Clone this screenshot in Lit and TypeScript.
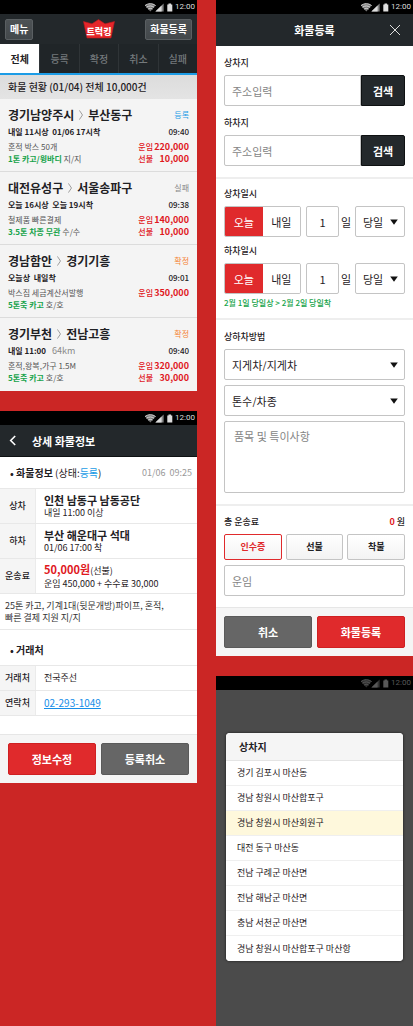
import { LitElement, html, css, nothing } from "lit";
import { customElement, state } from "lit/decorators.js";
import { classMap } from "lit/directives/class-map.js";

const base = css`
  :host {
    display: block;
    font-family: "Noto Sans CJK KR", "Noto Sans", sans-serif;
    font-size: 9px;
    line-height: 12px;
    color: #1f2124;
  }
  * {
    box-sizing: border-box;
  }
  h1, h2, h3, p, ul, dl, dd, dt {
    margin: 0;
    padding: 0;
    font: inherit;
  }
  ul {
    list-style: none;
  }
  button, input, select, textarea {
    margin: 0;
    font: inherit;
    color: inherit;
    min-width: 0;
  }
  button {
    padding: 0;
    cursor: pointer;
  }
  .actions {
    display: grid;
    grid-template-columns: 1fr 1fr;
    gap: 5px;
    padding: 8px;
    border-top: 1px solid #e6e6e6;
    background: #f5f5f5;
  }
  .action {
    height: 32px;
    border: 1px solid #5a5a5a;
    border-radius: 2px;
    background: #666;
    color: #fff;
    font-size: 11px;
    font-weight: 700;
  }
  .action.primary {
    border-color: #cf2022;
    background: #e02a2c;
  }
`;

@customElement("status-bar")
export class StatusBar extends LitElement {
  static styles = css`
    :host {
      display: flex;
      justify-content: flex-end;
      align-items: center;
      gap: 2px;
      height: 14px;
      padding-right: 2px;
      background: #000;
      color: #ddd;
      font: 8px/14px Roboto, sans-serif;
    }
    :host([dimmed]) {
      color: #585858;
    }
    .icons {
      display: block;
    }
  `;
  render() {
    return html`
      <svg class="icons" width="28" height="9" viewBox="0 0 28 9" fill="currentColor" aria-hidden="true">
        <path d="M0 2.6C3 .1 7.600 .1 10.600 2.600L5.300 8.600Z" opacity=".55" />
        <path d="M0 2.600C3 .1 7.600 .1 10.600 2.600M1.500 4.300C3.700 2.500 6.900 2.500 9.100 4.300M3.200 6.100C4.500 5 6.100 5 7.400 6.100" fill="none" stroke="currentColor" stroke-width="1" />
        <path d="M18.600 .4V8.600H10.400Z" opacity=".6" />
        <path d="M16.600 2.400V8.600H10.400Z" />
        <path d="M22.300 1.500H23.500V.6H26.100V1.500H27.300V8.600H22.300Z" />
      </svg>
      <span>12:00</span>
    `;
  }
}

interface Load {
  from: string;
  to: string;
  status: string;
  tone: string;
  when: string;
  distance?: string;
  time: string;
  goods: string;
  truck: string;
  handling: string;
  fares: [string, string][];
}

const loads: Load[] = [
  { from: "경기남양주시", to: "부산동구", status: "등록", tone: "blue", when: "내일 11시상\u00a0 01/06 17시착", time: "09:40", goods: "혼적 박스 50개", truck: "1톤 카고/윙바디", handling: "지/지", fares: [["운임", "220,000"], ["선불", "10,000"]] },
  { from: "대전유성구", to: "서울송파구", status: "실패", tone: "grey", when: "오늘 16시상\u00a0 오늘 19시착", time: "09:38", goods: "철제품 빠른결제", truck: "3.5톤 차종 무관", handling: "수/수", fares: [["운임", "140,000"], ["선불", "10,000"]] },
  { from: "경남함안", to: "경기기흥", status: "확정", tone: "orange", when: "오늘상\u00a0 내일착", time: "09:01", goods: "박스짐 세금계산서발행", truck: "5톤축 카고", handling: "호/호", fares: [["운임", "350,000"]] },
  { from: "경기부천", to: "전남고흥", status: "확정", tone: "orange", when: "내일 11:00", distance: "64km", time: "09:40", goods: "혼적,왕복,가구 1.5M", truck: "5톤축 카고", handling: "호/호", fares: [["운임", "320,000"], ["선불", "30,000"]] },
];

@customElement("load-list")
export class LoadList extends LitElement {
  static styles = [
    base,
    css`
      :host {
        background: #f4f4f4;
      }
      .bar {
        display: grid;
        grid-template-columns: 1fr auto 1fr;
        align-items: center;
        height: 30px;
        padding: 0 5px;
        background: #23282b;
      }
      .tool {
        height: 21px;
        padding: 0 4px;
        border: 1px solid #5a5f62;
        border-radius: 2px;
        background: linear-gradient(#4d5255, #43484b);
        color: #fff;
        font-size: 10px;
        font-weight: 700;
        justify-self: start;
      }
      .tool.end {
        justify-self: end;
      }
      .logo {
        display: block;
      }
      .tabs {
        display: grid;
        grid-template-columns: repeat(5, 1fr);
        height: 31px;
        border-bottom: 2px solid #1c9ce6;
        background: #202528;
      }
      .tab {
        border: 0;
        border-left: 1px solid #2f3437;
        background: none;
        color: #74797c;
        font-size: 10px;
        font-weight: 500;
      }
      .tab.on {
        border-left: 0;
        background: #fff;
        color: #1f2124;
        font-weight: 700;
      }
      .summary {
        height: 24px;
        padding: 0 8px;
        background: linear-gradient(#dcdcdc, #e4e4e4);
        font-size: 10px;
        line-height: 24px;
        font-weight: 500;
      }
      .load {
        display: grid;
        align-content: start;
        gap: 3px;
        height: 73px;
        padding: 8px 8px 0;
        border-bottom: 1px solid #dcdcdc;
        font-size: 8px;
      }
      .load:last-child {
        border-bottom: 0;
      }
      .row {
        display: flex;
        justify-content: space-between;
        align-items: center;
      }
      .route {
        display: flex;
        align-items: center;
        gap: 5px;
        font-size: 12px;
        line-height: 16px;
        font-weight: 700;
      }
      .when {
        font-weight: 700;
      }
      .time {
        font-weight: 500;
      }
      .distance {
        margin-left: 6px;
        color: #888;
        font-weight: 400;
        font-size: 9px;
      }
      .info {
        color: #555;
      }
      .truck {
        color: #16a34a;
        font-weight: 700;
      }
      .fare {
        display: flex;
        color: #e0181e;
        font-weight: 500;
      }
      .fare dd {
        min-width: 36px;
        text-align: right;
        font-size: 9px;
        font-weight: 700;
      }
      .blue { color: #1c9ce6; }
      .grey { color: #888; }
      .orange { color: #f58233; }
    `,
  ];

  @state() private tab = "전체";

  private row(l: Load) {
    return html`
      <li class="load">
        <div class="row">
          <h2 class="route">
            ${l.from}
            <svg width="4" height="10" viewBox="0 0 4 10" fill="none" stroke="#888" stroke-width=".8" role="img" aria-label="에서"><path d="M.4 .4L3.500 5L.4 9.600" /></svg>
            ${l.to}
          </h2>
          <span class=${l.tone}>${l.status}</span>
        </div>
        <div class="row">
          <span class="when">${l.when}${l.distance ? html`<span class="distance">${l.distance}</span>` : nothing}</span>
          <time class="time">${l.time}</time>
        </div>
        <div class="row">
          <div class="info">
            <p>${l.goods}</p>
            <p><span class="truck">${l.truck}</span> ${l.handling}</p>
          </div>
          <div>
            ${[0, 1].map((i) => l.fares[i]
              ? html`<dl class="fare"><dt>${l.fares[i][0]}</dt><dd>${l.fares[i][1]}</dd></dl>`
              : html`<p>&nbsp;</p>`)}
          </div>
        </div>
      </li>
    `;
  }

  render() {
    return html`
      <status-bar></status-bar>
      <header class="bar">
        <button class="tool">메뉴</button>
        <svg class="logo" width="32" height="20" viewBox="0 0 32 20" role="img" aria-label="트럭킹">
          <path d="M.5 2.500L9 4.800L15.500 .5L22 4.800L31.500 2.500L28 19H4Z" fill="#e4262a" stroke="#b8181c" stroke-width=".6" />
          <text x="16" y="15.500" text-anchor="middle" fill="#fff" font-size="9" font-weight="900">트럭킹</text>
        </svg>
        <button class="tool end">화물등록</button>
      </header>
      <nav class="tabs">
        ${["전체", "등록", "확정", "취소", "실패"].map(
          (t) => html`<button class=${classMap({ tab: true, on: t === this.tab })} @click=${() => (this.tab = t)}>${t}</button>`
        )}
      </nav>
      <p class="summary">화물 현황 (01/04) 전체 10,000건</p>
      <ul>${loads.map((l) => this.row(l))}</ul>
    `;
  }
}

@customElement("load-detail")
export class LoadDetail extends LitElement {
  static styles = [
    base,
    css`
      :host {
        background: #fff;
      }
      .bar {
        display: flex;
        align-items: center;
        gap: 15px;
        height: 32px;
        padding-left: 9px;
        border-bottom: 1px solid #0e1112;
        background: #23282b;
        color: #fff;
      }
      .back {
        display: flex;
        border: 0;
        background: none;
      }
      .title {
        font-size: 11px;
        font-weight: 700;
      }
      .section {
        display: flex;
        justify-content: space-between;
        align-items: center;
        height: 31px;
        padding: 0 5px 0 10px;
        font-size: 10px;
      }
      .section.tall {
        height: 35px;
        padding-top: 5px;
      }
      .section b {
        font-weight: 700;
      }
      .date {
        color: #999;
        font-size: 9px;
      }
      .blue {
        color: #1c9ce6;
      }
      .row {
        display: grid;
        grid-template-columns: 36px 1fr;
        border-top: 1px solid #e8e8e8;
      }
      .row dt {
        display: grid;
        place-items: center;
        border-right: 1px solid #ebebeb;
        background: #f5f5f5;
        font-weight: 500;
      }
      .row dd {
        display: flex;
        flex-direction: column;
        justify-content: center;
        min-height: 34px;
        padding-left: 8px;
      }
      .row.short dd {
        min-height: 24px;
      }
      .place {
        font-size: 11px;
        line-height: 14px;
        font-weight: 700;
      }
      .sum {
        line-height: 14px;
      }
      .sum b {
        color: #e0181e;
        font-size: 11px;
      }
      .memo {
        padding: 6px 5px 5px;
        border: solid #e8e8e8;
        border-width: 1px 0;
        color: #333;
      }
      .phone {
        align-self: start;
        color: #168ee8;
        font-size: 10px;
      }
      .last {
        margin-bottom: 18px;
        border-bottom: 1px solid #e8e8e8;
      }
    `,
  ];
  render() {
    return html`
      <status-bar></status-bar>
      <header class="bar">
        <button class="back" aria-label="뒤로">
          <svg width="8" height="11" viewBox="0 0 8 11" fill="none" stroke="#fff" stroke-width="1.600"><path d="M6.200 1L1.700 5.500L6.200 10" /></svg>
        </button>
        <h1 class="title">상세 화물정보</h1>
      </header>
      <h2 class="section">
        <span><b>• 화물정보</b> (상태:<span class="blue">등록</span>)</span>
        <time class="date">01/06&nbsp; 09:25</time>
      </h2>
      <dl>
        <div class="row"><dt>상차</dt><dd><p class="place">인천 남동구 남동공단</p><p>내일 11:00 이상</p></dd></div>
        <div class="row"><dt>하차</dt><dd><p class="place">부산 해운대구 석대</p><p>01/06 17:00 착</p></dd></div>
        <div class="row"><dt>운송료</dt><dd><p class="sum"><b>50,000원</b>(선불)</p><p>운임 450,000 + 수수료 30,000</p></dd></div>
      </dl>
      <p class="memo">25톤 카고, 기계1대(뒷문개방)파이프, 혼적,<br />빠른 결제 지원 지/지</p>
      <h2 class="section tall"><b>• 거래처</b></h2>
      <dl class="last">
        <div class="row short"><dt>거래처</dt><dd>전국주선</dd></div>
        <div class="row short"><dt>연락처</dt><dd><a class="phone" href="tel:02-293-1049">02-293-1049</a></dd></div>
      </dl>
      <footer class="actions">
        <button class="action primary">정보수정</button>
        <button class="action">등록취소</button>
      </footer>
    `;
  }
}

@customElement("load-form")
export class LoadForm extends LitElement {
  static styles = [
    base,
    css`
      :host {
        background: #fff;
      }
      .bar {
        display: grid;
        grid-template-columns: 1fr auto 1fr;
        align-items: center;
        height: 32px;
        padding: 0 12px;
        background: #23282b;
        color: #fff;
      }
      .title {
        grid-column: 2;
        font-size: 11px;
        font-weight: 700;
      }
      .close {
        display: flex;
        justify-self: end;
        border: 0;
        background: none;
      }
      .group {
        display: grid;
        padding: 9px 8px 11px;
        border-bottom: 2px solid #eee;
      }
      .label {
        height: 20px;
        font-size: 9px;
        line-height: 15px;
        font-weight: 500;
      }
      .label.later {
        margin-top: 9px;
      }
      .box {
        width: 100%;
        height: 31px;
        padding: 0 7px;
        border: 1px solid #c4c4c4;
        border-radius: 2px;
        background: #fff;
        font-size: 11px;
      }
      .box::placeholder {
        color: #858585;
        opacity: 1;
      }
      .search {
        display: grid;
        grid-template-columns: 1fr 44px;
      }
      .search .box {
        border-radius: 2px 0 0 2px;
      }
      .find {
        border: 1px solid #0e1112;
        border-radius: 0 2px 2px 0;
        background: #23282b;
        color: #fff;
        font-size: 11px;
        font-weight: 700;
      }
      .when {
        display: grid;
        grid-template-columns: 77px 44px 50px;
        justify-content: space-between;
      }
      .days {
        display: grid;
        grid-template-columns: 1fr 1fr;
        border: 1px solid #c4c4c4;
        border-radius: 2px;
        overflow: hidden;
      }
      .day {
        border: 0;
        background: #fff;
        font-size: 11px;
      }
      .day.on {
        background: #e02a2c;
        color: #fff;
      }
      .count {
        display: grid;
        grid-template-columns: 33px auto;
        align-items: center;
        gap: 2px;
        font-size: 11px;
      }
      .count .box {
        padding: 0;
        text-align: center;
      }
      .pick {
        display: grid;
        align-items: center;
      }
      .pick > * {
        grid-area: 1 / 1;
      }
      .pick .box {
        appearance: none;
      }
      .pick svg {
        justify-self: end;
        margin-right: 7px;
        pointer-events: none;
      }
      .note {
        margin-top: 3px;
        color: #16a34a;
        font-size: 8px;
        font-weight: 500;
      }
      .group.dates {
        padding: 7px 8px 9px;
      }
      .dates .label.later {
        margin-top: 6px;
      }
      .stack {
        display: grid;
        gap: 5px;
      }
      .memo {
        display: block;
        height: 72px;
        padding: 6px 9px;
        line-height: 16px;
        resize: none;
      }
      .total {
        display: flex;
        justify-content: space-between;
      }
      .total b {
        color: #e0181e;
      }
      .pays {
        display: grid;
        grid-template-columns: repeat(3, 1fr);
        gap: 4px;
      }
      .pay {
        height: 26px;
        border: 1px solid #c4c4c4;
        border-radius: 2px;
        background: linear-gradient(#fff, #f3f3f3);
        font-size: 9px;
        font-weight: 700;
      }
      .pay.on {
        border-color: #e02a2c;
        color: #e02a2c;
      }
      .group.fee {
        padding-top: 8px;
        border-bottom: 0;
      }
    `,
  ];

  @state() private pay = "인수증";
  @state() private day: Record<string, string> = { load: "오늘", unload: "오늘" };

  private select(id: string, label: string, value: string) {
    return html`
      <div class="pick">
        <select class="box" id=${id} aria-label=${label}><option>${value}</option></select>
        <svg width="8" height="6" viewBox="0 0 8 6" fill="#111" aria-hidden="true"><path d="M.2 .5H7.800L4 5.700Z" /></svg>
      </div>
    `;
  }

  private address(id: string, label: string, later = false) {
    return html`
      <label class=${classMap({ label: true, later })} for=${id}>${label}</label>
      <div class="search">
        <input class="box" id=${id} placeholder="주소입력" />
        <button class="find">검색</button>
      </div>
    `;
  }

  private date(id: string, label: string, later = false) {
    return html`
      <label class=${classMap({ label: true, later })} for=${id}>${label}</label>
      <div class="when">
        <div class="days">
          ${["오늘", "내일"].map(
            (d) => html`<button class=${classMap({ day: true, on: this.day[id] === d })} @click=${() => (this.day = { ...this.day, [id]: d })}>${d}</button>`
          )}
        </div>
        <div class="count"><input class="box" id=${id} value="1" inputmode="numeric" />일</div>
        ${this.select(`${id}-time`, label, "당일")}
      </div>
    `;
  }

  render() {
    return html`
      <status-bar></status-bar>
      <header class="bar">
        <h1 class="title">화물등록</h1>
        <button class="close" aria-label="닫기">
          <svg width="12" height="12" viewBox="0 0 12 12" stroke="#ddd" stroke-width="1"><path d="M1 1L11 11M11 1L1 11" /></svg>
        </button>
      </header>
      <section class="group">
        ${this.address("origin", "상차지")}
        ${this.address("target", "하차지", true)}
      </section>
      <section class="group dates">
        ${this.date("load", "상차일시")}
        ${this.date("unload", "하차일시", true)}
        <p class="note">2월 1일 당일상 &gt; 2월 2일 당일착</p>
      </section>
      <section class="group">
        <label class="label" for="method">상하차방법</label>
        <div class="stack">
          ${this.select("method", "상하차방법", "지게차/지게차")}
          ${this.select("truck", "톤수/차종", "톤수/차종")}
          <textarea class="box memo" placeholder="품목 및 특이사항" aria-label="품목 및 특이사항"></textarea>
        </div>
      </section>
      <section class="group fee">
        <div class="label total"><label for="fare">총 운송료</label><span><b>0</b> 원</span></div>
        <div class="stack">
          <div class="pays">
            ${["인수증", "선불", "착불"].map(
              (p) => html`<button class=${classMap({ pay: true, on: p === this.pay })} @click=${() => (this.pay = p)}>${p}</button>`
            )}
          </div>
          <input class="box" id="fare" placeholder="운임" />
        </div>
      </section>
      <footer class="actions">
        <button class="action">취소</button>
        <button class="action primary">화물등록</button>
      </footer>
    `;
  }
}

@customElement("place-picker")
export class PlacePicker extends LitElement {
  static styles = [
    base,
    css`
      :host {
        display: flex;
        flex-direction: column;
        background: #4b4b4b;
      }
      .sheet {
        margin: 43px 10px 0;
        border-radius: 4px;
        background: #fff;
        box-shadow: 0 0 2px 1px #333;
        overflow: hidden;
      }
      .title {
        height: 28px;
        padding-left: 13px;
        border-bottom: 1px solid #e4e4e4;
        background: #f5f5f5;
        font-size: 10px;
        line-height: 28px;
        font-weight: 700;
      }
      .place {
        display: block;
        width: 100%;
        height: 25px;
        padding-left: 11px;
        border: 0;
        border-bottom: 1px solid #efefef;
        background: #fff;
        text-align: left;
      }
      li:last-child .place {
        border-bottom: 0;
      }
      .place.on {
        background: #fef8dc;
      }
    `,
  ];

  @state() private chosen = 2;

  render() {
    const places = ["경기 김포시 마산동", "경남 창원시 마산합포구", "경남 창원시 마산회원구", "대전 동구 마산동", "전남 구례군 마산면", "전남 해남군 마산면", "충남 서천군 마산면", "경남 창원시 마산합포구 마산항"];
    return html`
      <status-bar dimmed></status-bar>
      <section class="sheet" role="dialog" aria-label="상차지">
        <h2 class="title">상차지</h2>
        <ul>
          ${places.map(
            (p, i) => html`<li><button class=${classMap({ place: true, on: i === this.chosen })} @click=${() => (this.chosen = i)}>${p}</button></li>`
          )}
        </ul>
      </section>
    `;
  }
}

@customElement("app-root")
export class AppRoot extends LitElement {
  static styles = css`
    :host {
      display: block;
      min-height: 100vh;
      background: #cb2625;
    }
    .board {
      display: grid;
      grid-template-columns: minmax(0, 1fr) minmax(0, 1fr);
      gap: 19px;
      min-height: 100vh;
    }
    .column {
      display: flex;
      flex-direction: column;
      gap: 20px;
    }
    .fill {
      flex: 1;
    }
  `;
  render() {
    return html`
      <main class="board">
        <div class="column">
          <load-list></load-list>
          <load-detail></load-detail>
        </div>
        <div class="column">
          <load-form></load-form>
          <place-picker class="fill"></place-picker>
        </div>
      </main>
    `;
  }
}
